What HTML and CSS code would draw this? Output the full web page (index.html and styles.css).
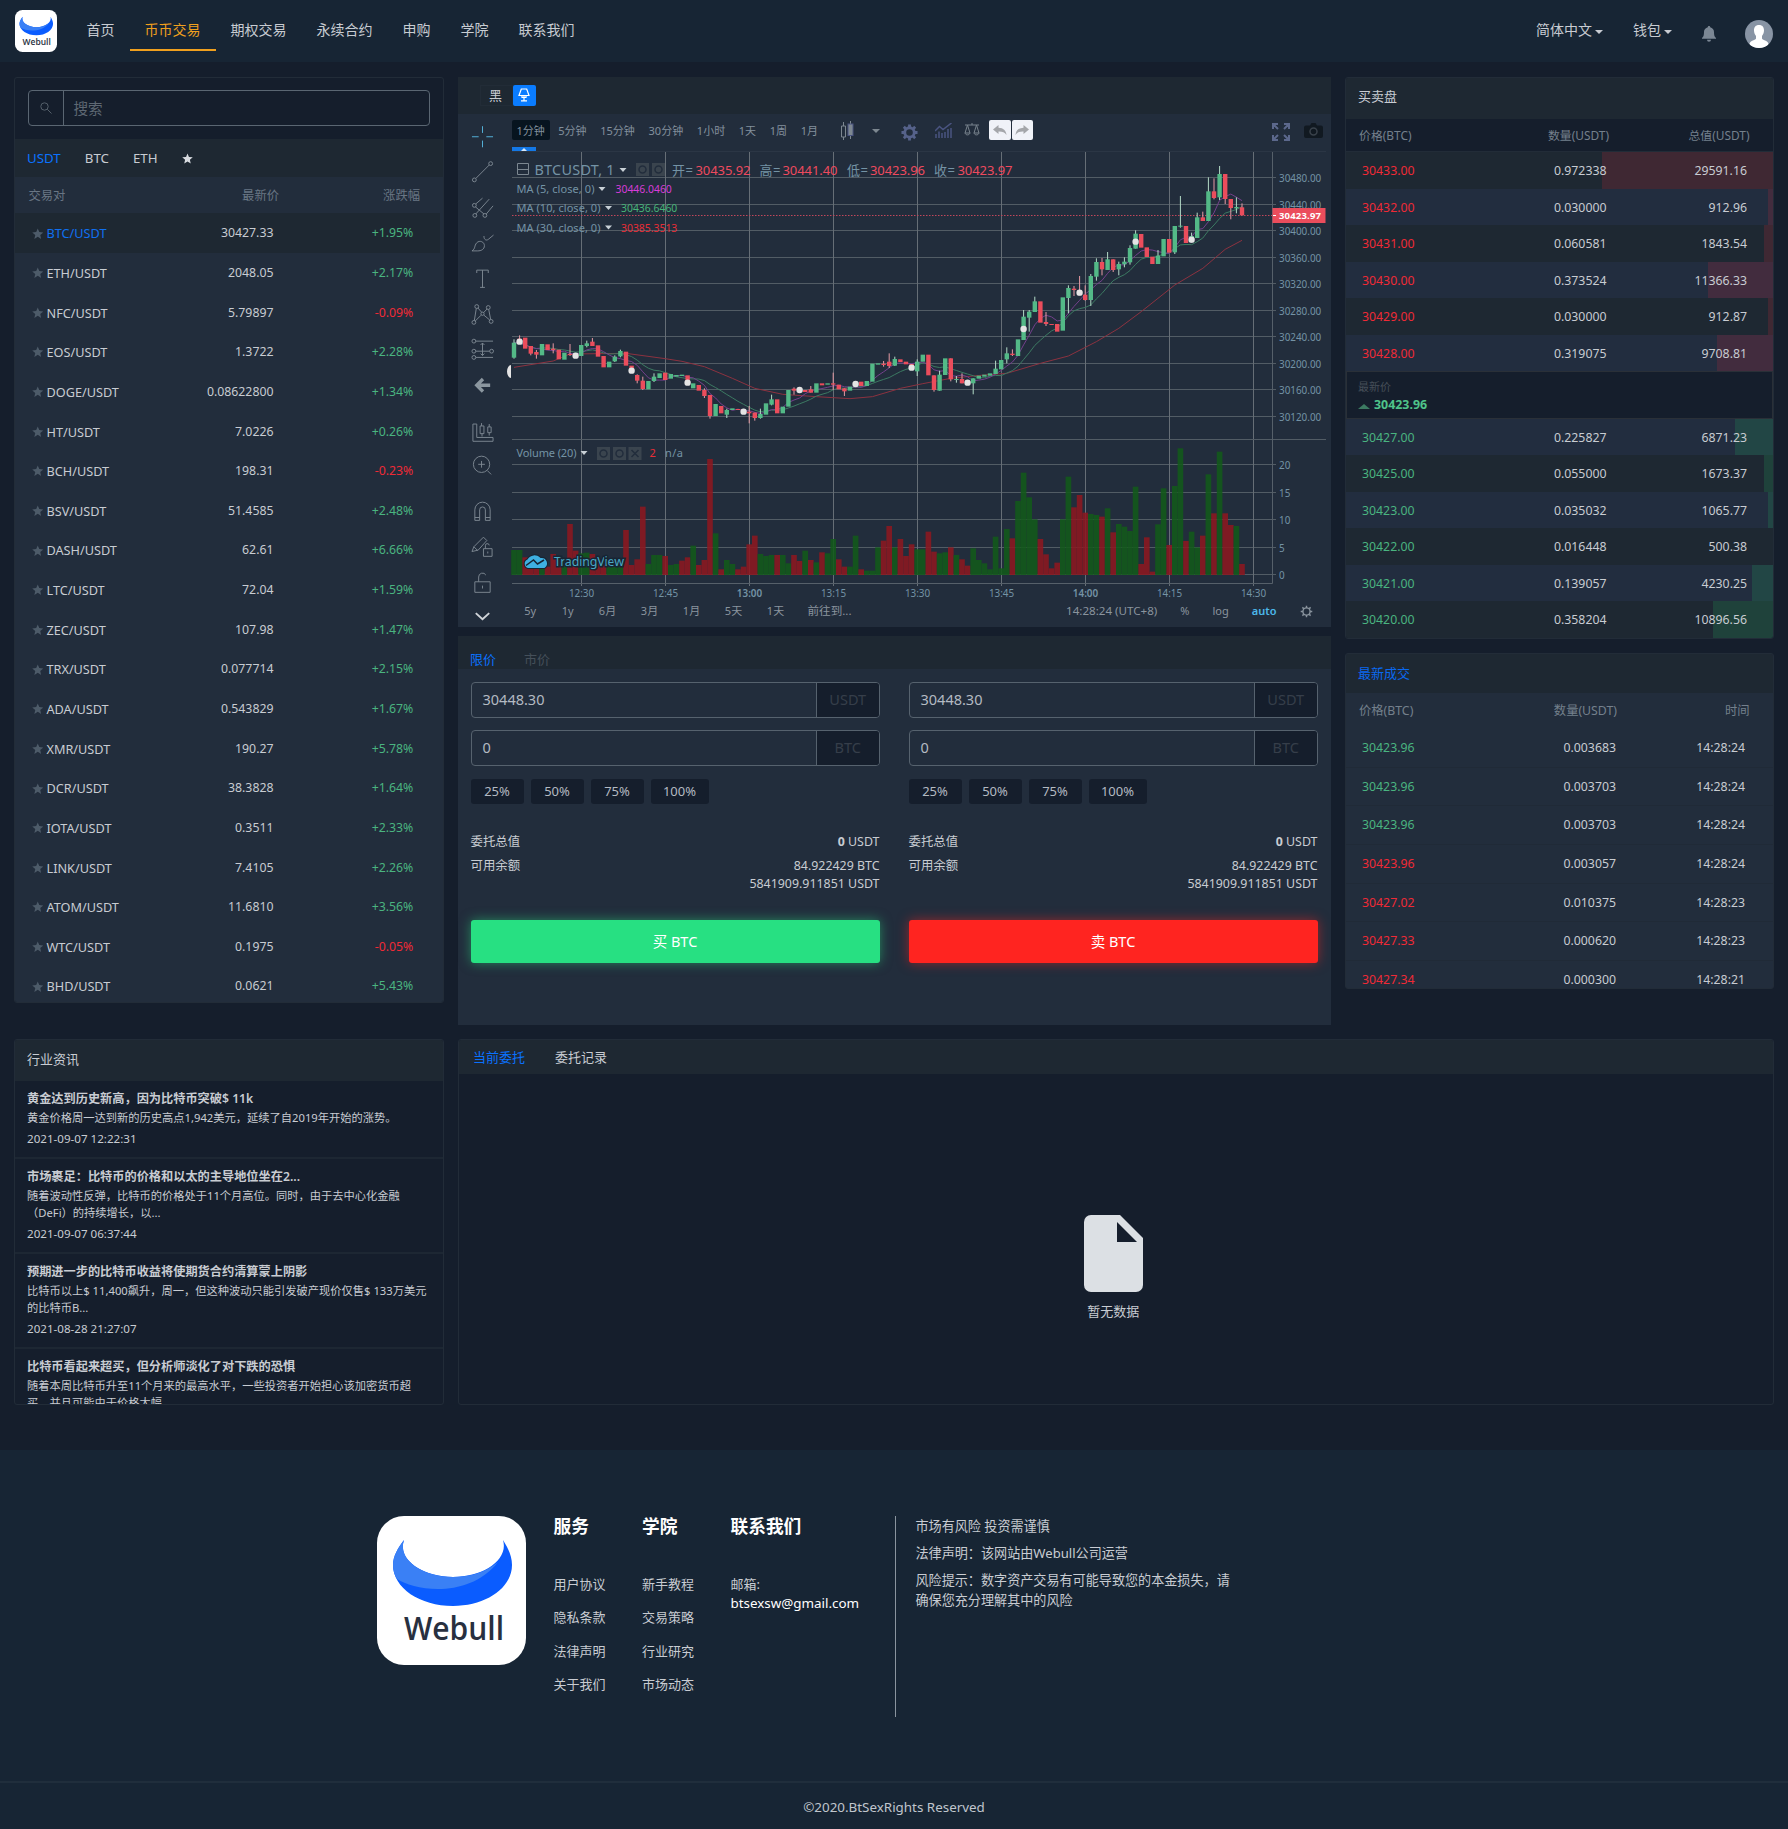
FILE: index.html
```
<!DOCTYPE html>
<html lang="zh-CN">
<head>
  <meta charset="UTF-8">
  <meta name="viewport" content="width=device-width, initial-scale=1.0">
  <title>币币交易</title>
  <link rel="stylesheet" href="styles.css">
</head>
<body>
  <svg class="sprite" width="0" height="0">
    <symbol id="star" viewBox="0 0 24 24">
      <path d="M12 1l3.2 7.6 8.3.7-6.3 5.4 1.9 8.1L12 18.5l-7.1 4.3 1.9-8.1L.5 9.300l8.300-.7z"/>
    </symbol>
  </svg>

  <header class="navbar">
    <svg class="navbar-logo" viewBox="0 0 149 149">
      <rect width="149" height="149" rx="27" fill="#fff"/>
      <path d="M27 24C21 32 16 40 16 49c0 23 27 41 60 41s59-18 59-41c0-9-4-17-9-25 6 20-20 37-50 37S20 44 27 24z" fill="#0a5cff"/>
      <path d="M27 24C21 32 16 40 16 49c0 5 1 9 4 14 18 12 72 20 101-17-12 10-27 15-45 15C46 61 20 44 27 24z" fill="#3a80f5"/>
      <text class="logo-text" x="27" y="124" textLength="100" lengthAdjust="spacingAndGlyphs">Webull</text>
    </svg>
    <nav class="nav">
      <a class="nav-link">首页</a>
      <a class="nav-link nav-link--active">币币交易</a>
      <a class="nav-link">期权交易</a>
      <a class="nav-link">永续合约</a>
      <a class="nav-link">申购</a>
      <a class="nav-link">学院</a>
      <a class="nav-link">联系我们</a>
    </nav>
    <div class="user-nav">
      <a class="dropdown">简体中文</a>
      <a class="dropdown">钱包</a>
      <svg class="bell" viewBox="0 0 14 16"><path d="M7 0c.7 0 1.200.5 1.200 1.200C10.500 1.800 12 3.600 12 6c0 4 1 5 2 6v.8H0V12c1-1 2-2 2-6 0-2.400 1.500-4.200 3.800-4.800C5.800.5 6.300 0 7 0zM5 13.800h4a2 2 0 0 1-4 0z" fill="#7b8794"/></svg>
      <svg class="avatar" viewBox="0 0 28 28">
        <clipPath id="round"><circle cx="14" cy="14" r="14"/></clipPath>
        <g clip-path="url(#round)">
          <rect width="28" height="28" fill="#8894a4"/>
          <path d="M14 5c3.400 0 5 2.200 5 5.300 0 2.500-.8 4.300-2 5.600v2.600c0 1.500 6 1.700 6.500 5.500L22 28H6l-1.500-4c.5-3.800 6.500-4 6.500-5.500v-2.600c-1.200-1.300-2-3.100-2-5.600C9 7.200 10.600 5 14 5z" fill="#fff"/>
        </g>
      </svg>
    </div>
  </header>

  <main class="layout">
    <section class="panel markets">
      <div class="search">
        <span class="search-icon"><svg viewBox="0 0 12 12"><circle cx="4.500" cy="4.500" r="3.700"/><path d="M7.300 7.300L11.500 11.500"/></svg></span>
        <span class="search-input">搜索</span>
      </div>
      <div class="market-tabs">
        <a class="active">USDT</a><a>BTC</a><a>ETH</a><a><svg class="tab-star"><use href="#star"/></svg></a>
      </div>
      <div class="market-head"><span>交易对</span><span>最新价</span><span>涨跌幅</span></div>
      <div id="markets"></div>
    </section>

    <div class="center">
      <section class="chart">
        <div class="theme-bar">
          <span class="theme-name">黑</span>
          <span class="theme-btn"><svg viewBox="0 0 12 14"><path d="M3.300 1h5.400L11 7.500H1zM6 7.500V12.500M3 12.800h6M4 7.500v2h4v-2"/></svg></span>
        </div>
        <div class="chart-body">
          <div class="tools">
            <svg class="tool tool--on" viewBox="0 0 24 24"><path d="M12 1v7M12 16v7M1 12h7M16 12h7"/></svg>
            <svg class="tool" viewBox="0 0 24 24"><circle cx="3.500" cy="20.500" r="2"/><circle cx="20.500" cy="3.500" r="2"/><path d="M5 19L19 5"/></svg>
            <svg class="tool" viewBox="0 0 24 24"><circle cx="3.500" cy="9.500" r="2"/><circle cx="4" cy="20" r="2"/><circle cx="14.500" cy="20" r="2"/><path d="M5 8l7-6M5 18.500L19 3M16 18.500L23 10M4.500 11l9 7.500"/></svg>
            <svg class="tool" viewBox="0 0 24 24"><path d="M1 20.500c4-2.500 2-5 5-8.500 3-3 8-1 8 3s-3.500 5.500-7 5.500zM13.500 5c0 4 2.500 5 4.500 3.500L23.500 4"/></svg>
            <svg class="tool" viewBox="0 0 24 24"><path d="M6 6V3h12v3M12 3v18M9.500 21h5"/></svg>
            <svg class="tool" viewBox="0 0 24 24"><circle cx="6" cy="4.500" r="2"/><circle cx="18" cy="5.500" r="2"/><circle cx="12" cy="12" r="1.700"/><circle cx="3" cy="21" r="2"/><circle cx="21" cy="20" r="2"/><path d="M5.500 6.500L3.500 19M7.200 6l4 4.500M16.800 7l-3.800 4M18.500 7.500l2 10.500M4.500 19.500l6-6M13.500 13.500l6 5"/></svg>
            <svg class="tool" viewBox="0 0 24 24"><circle cx="3" cy="3" r="2"/><circle cx="3" cy="13.500" r="2"/><circle cx="21.500" cy="13.500" r="2"/><circle cx="3" cy="20" r="2"/><path d="M5 3h18M5 13.500h14.500M5 20h18M12 5v13M10 7l2-2 2 2M10 16l2 2 2-2"/></svg>
            <svg class="tool tool--back" viewBox="0 0 24 24"><path d="M6 12.500h14M12.500 6L6 12.500l6.500 6.500"/></svg>
            <svg class="tool tool--gap" viewBox="0 0 24 24"><path d="M2 5v18h21v-4H6V5zM11 4v3M9.500 7h4v8h-4zM11.500 15v3M19 5v3M17.500 8h3.500v6h-3.500zM19 14v3"/></svg>
            <svg class="tool" viewBox="0 0 24 24"><circle cx="11" cy="10.500" r="8.500"/><path d="M11 7v7M7.500 10.500h7M17 17l4 4"/></svg>
            <svg class="tool tool--gap" viewBox="0 0 24 24"><path d="M4 21V10a8 8 0 0 1 16 0v11h-5V10a3 3 0 0 0-6 0v11zM4 18h5M15 18h5"/></svg>
            <svg class="tool" viewBox="0 0 24 24"><path d="M1 17l2-5L13 2l3.500 3.500-9 10zM3 12l4 4M13 14h9v8h-9zM15 14v-3a2 2 0 0 1 4-.5M17.500 17v2"/></svg>
            <svg class="tool" viewBox="0 0 24 24"><path d="M4 11h16v11H4zM8 11V6a4 4 0 0 1 7.500-2M12 15v3"/></svg>
            <svg class="tool tool--down" viewBox="0 0 24 24"><path d="M5 10l7 6.500L19 10"/></svg>
          </div>
          <div class="chart-main">
            <div class="chart-toolbar">
              <a class="interval interval--active">1分钟</a>
              <a class="interval">5分钟</a>
              <a class="interval">15分钟</a>
              <a class="interval">30分钟</a>
              <a class="interval">1小时</a>
              <a class="interval">1天</a>
              <a class="interval">1周</a>
              <a class="interval">1月</a>
              <svg class="ti ti-candle" viewBox="0 0 14 20"><path d="M3.500 1v4M3.500 16v3M1.500 5h4v11h-4z" fill="none" stroke="#7d8790"/><path d="M10.500 0v3M10.500 14v4" stroke="#7d8790"/><rect x="8" y="3" width="5" height="11.500" fill="#7d8790"/></svg>
              <span class="ti ti-caret"></span>
              <svg class="ti ti-gear" viewBox="0 0 18 18"><circle cx="9" cy="9" r="5"/><path d="M9 0.500v3M9 14.500v3M.5 9h3M14.500 9h3M3 3l2.200 2.200M12.800 12.800L15 15M15 3l-2.200 2.200M5.200 12.800L3 15"/></svg>
              <svg class="ti ti-ind" viewBox="0 0 17 15"><path d="M1 15v-4M4 15V8.500M7 15v-5M10 15V9M13 15V6M16 15V5M0 8l4.500-4.500 3.500 3L16.500 0"/></svg>
              <svg class="ti ti-scale" viewBox="0 0 16 14"><path d="M1 2h14M8 0v2M3.500 2L1 10h5zM12.500 2L10 10h5zM1 10c.5 2.500 4.500 2.500 5 0M10 10c.5 2.500 4.500 2.500 5 0"/></svg>
              <span class="undo"><svg viewBox="0 0 14 10"><path d="M5.500 0v2.800C10.500 3 13 5.500 13.500 10c-2-2.800-4-3.600-8-3.500V9L0 4.500z"/></svg></span>
              <span class="undo"><svg viewBox="0 0 14 10"><path d="M8.500 0v2.800C3.500 3 1 5.500.5 10c2-2.800 4-3.600 8-3.500V9L14 4.500z"/></svg></span>
              <svg class="ti ti-full" viewBox="0 0 18 18"><path d="M1 6V1h5M1 1l5 5M12 1h5v5M17 1l-5 5M1 12v5h5M1 17l5-5M17 12v5h-5M17 17l-5-5"/></svg>
              <svg class="ti ti-cam" viewBox="0 0 19 15"><path d="M2 2.500h4L7.500 0h4L13 2.500h4a2 2 0 0 1 2 2V13a2 2 0 0 1-2 2H2a2 2 0 0 1-2-2V4.500a2 2 0 0 1 2-2z" fill="#111921" stroke="none"/><circle cx="9.500" cy="8.500" r="3.500" fill="none" stroke="#3a424b" stroke-width="1.500"/></svg>
            </div>
            <div class="toolbar-tab"></div>
            <svg id="chart" class="chart-canvas" width="818" height="450" viewBox="512 151 818 450"></svg>
            <div class="range-bar">
              <a>5y</a><a>1y</a><a>6月</a><a>3月</a><a>1月</a><a>5天</a><a>1天</a><a class="goto">前往到...</a>
              <span class="clock">14:28:24 (UTC+8)</span><span class="pct">%</span><span class="log">log</span><span class="auto">auto</span>
              <svg class="cog" viewBox="0 0 18 18"><circle cx="9" cy="9" r="5"/><path d="M9 1v3M9 14v3M1 9h3M14 9h3M3.300 3.300l2 2M12.700 12.700l2 2M14.700 3.300l-2 2M5.300 12.700l-2 2"/></svg>
            </div>
          </div>
        </div>
      </section>

      <section class="trade">
        <div class="trade-tabs"><a class="active">限价</a><a>市价</a></div>
        <div class="trade-forms">
          <form class="trade-form">
            <div class="field"><span class="field-value">30448.30</span><span class="field-unit">USDT</span></div>
            <div class="field"><span class="field-value">0</span><span class="field-unit">BTC</span></div>
            <div class="percents"><a>25%</a><a>50%</a><a>75%</a><a>100%</a></div>
            <div class="sum"><span>委托总值</span><span><b>0</b> USDT</span></div>
            <div class="sum sum--balance"><span>可用余额</span><span>84.922429 BTC<br>5841909.911851 USDT</span></div>
            <a class="submit submit--buy">买 BTC</a>
          </form>
          <form class="trade-form">
            <div class="field"><span class="field-value">30448.30</span><span class="field-unit">USDT</span></div>
            <div class="field"><span class="field-value">0</span><span class="field-unit">BTC</span></div>
            <div class="percents"><a>25%</a><a>50%</a><a>75%</a><a>100%</a></div>
            <div class="sum"><span>委托总值</span><span><b>0</b> USDT</span></div>
            <div class="sum sum--balance"><span>可用余额</span><span>84.922429 BTC<br>5841909.911851 USDT</span></div>
            <a class="submit submit--sell">卖 BTC</a>
          </form>
        </div>
      </section>
    </div>

    <div class="side">
      <section class="panel book">
        <h2 class="book-title">买卖盘</h2>
        <div class="book-head"><span>价格(BTC)</span><span>数量(USDT)</span><span>总值(USDT)</span></div>
        <div id="asks"></div>
        <div class="last">
          <div class="last-label">最新价</div>
          <div class="last-price">30423.96</div>
        </div>
        <div id="bids"></div>
      </section>
      <section class="panel deals">
        <h2 class="deals-title">最新成交</h2>
        <div class="deals-head"><span>价格(BTC)</span><span>数量(USDT)</span><span>时间</span></div>
        <div id="deals"></div>
      </section>
    </div>

    <section class="panel news">
      <h2 class="news-title">行业资讯</h2>
      <article class="news-item">
        <h3>黄金达到历史新高，因为比特币突破$ 11k</h3>
        <p>黄金价格周一达到新的历史高点1,942美元，延续了自2019年开始的涨势。</p>
        <time>2021-09-07 12:22:31</time>
      </article>
      <article class="news-item">
        <h3>市场裹足：比特币的价格和以太的主导地位坐在2...</h3>
        <p>随着波动性反弹，比特币的价格处于11个月高位。同时，由于去中心化金融<br>（DeFi）的持续增长，以...</p>
        <time>2021-09-07 06:37:44</time>
      </article>
      <article class="news-item">
        <h3>预期进一步的比特币收益将使期货合约清算蒙上阴影</h3>
        <p>比特币以上$ 11,400飙升，周一，但这种波动只能引发破产现价仅售$ 133万美元<br>的比特币B...</p>
        <time>2021-08-28 21:27:07</time>
      </article>
      <article class="news-item">
        <h3>比特币看起来超买，但分析师淡化了对下跌的恐惧</h3>
        <p>随着本周比特币升至11个月来的最高水平，一些投资者开始担心该加密货币超<br>买，并且可能由于价格大幅</p>
      </article>
    </section>

    <section class="panel orders">
      <div class="orders-tabs"><a class="active">当前委托</a><a>委托记录</a></div>
      <div class="empty">
        <svg viewBox="0 0 59 77"><path d="M7 0h29l23 23v47a7 7 0 0 1-7 7H7a7 7 0 0 1-7-7V7a7 7 0 0 1 7-7z" fill="#dce0e4"/><path d="M33 7l20 20H33z" fill="#151e2c"/></svg>
        <span>暂无数据</span>
      </div>
    </section>
  </main>

  <footer class="footer">
    <div class="footer-main">
      <svg class="footer-logo" viewBox="0 0 149 149">
        <rect width="149" height="149" rx="27" fill="#fff"/>
        <path d="M27 24C21 32 16 40 16 49c0 23 27 41 60 41s59-18 59-41c0-9-4-17-9-25 6 20-20 37-50 37S20 44 27 24z" fill="#0a5cff"/>
        <path d="M27 24C21 32 16 40 16 49c0 5 1 9 4 14 18 12 72 20 101-17-12 10-27 15-45 15C46 61 20 44 27 24z" fill="#3a80f5"/>
        <text class="logo-text" x="27" y="124" textLength="100" lengthAdjust="spacingAndGlyphs">Webull</text>
      </svg>
      <div class="footer-col">
        <h4>服务</h4>
        <a>用户协议</a><a>隐私条款</a><a>法律声明</a><a>关于我们</a>
      </div>
      <div class="footer-col">
        <h4>学院</h4>
        <a>新手教程</a><a>交易策略</a><a>行业研究</a><a>市场动态</a>
      </div>
      <div class="footer-col footer-col--contact">
        <h4>联系我们</h4>
        <p>邮箱:<br><span class="mail">btsexsw@gmail.com</span></p>
      </div>
      <div class="footer-note">
        <p>市场有风险 投资需谨慎</p>
        <p>法律声明：该网站由Webull公司运营</p>
        <p>风险提示：数字资产交易有可能导致您的本金损失，请确保您充分理解其中的风险</p>
      </div>
    </div>
    <div class="copyright">©2020.BtSexRights Reserved</div>
  </footer>
  <script src="script.js"></script>
</body>
</html>
```
FILE: styles.css
```
* {
  margin: 0;
  padding: 0;
  box-sizing: border-box;
}

body {
  background: #151e2c;
  color: #c8ccd2;
  font-family: "Noto Sans", "Noto Sans CJK SC", sans-serif;
  font-size: 12.300px;
  line-height: 18px;
}

h2,
h3,
h4 {
  font-weight: 400;
}

.sprite {
  display: block;
}

.logo-text {
  font: 600 32px "Open Sans", sans-serif;
  fill: #283040;
}

.up {
  color: #4ab480;
}

.down {
  color: #f02a36;
}

/* Header */
.navbar {
  display: flex;
  align-items: flex-start;
  height: 62px;
  padding: 0 15px;
  background: #172534;
}

.navbar-logo {
  width: 42px;
  height: 42px;
  margin-top: 10px;
}

.nav {
  display: flex;
  margin-left: 14.500px;
}

.nav-link {
  height: 50.500px;
  padding: 20px 15px 0;
  font-size: 14px;
  line-height: 20px;
}

.nav-link--active {
  color: #f0a01e;
  border-bottom: 2px solid #f0a01e;
}

.user-nav {
  display: flex;
  margin-left: auto;
}

.dropdown {
  display: flex;
  align-items: center;
  height: 20px;
  margin: 20px 30px 0 0;
  font-size: 14px;
}

.dropdown::after {
  content: "";
  margin: 4px 0 0 3px;
  border: 4.500px solid transparent;
  border-top: 4px solid #c8ccd2;
  border-bottom: 0;
}

.bell {
  width: 14px;
  height: 16px;
  margin: 26px 29px 0 0;
}

.avatar {
  width: 28px;
  height: 28px;
  margin-top: 19.500px;
}

/* Page grid */
.layout {
  display: grid;
  grid-template-columns: 429.500px 872.500px 428.500px;
  grid-template-rows: 948.500px 366px;
  gap: 14px 14.500px;
  padding: 14.500px 14px 0;
}

.panel {
  border: 1px solid #222c38;
  border-radius: 3px;
  overflow: hidden;
}

.center,
.side {
  display: flex;
  flex-direction: column;
}

/* Markets */
.markets {
  height: 926.500px;
}

.search {
  display: flex;
  height: 35.500px;
  margin: 12.500px 12.500px 13.500px;
  border: 1px solid #5a6672;
  border-radius: 4px;
}

.search-icon {
  display: flex;
  align-items: center;
  justify-content: center;
  width: 35px;
  border-right: 1px solid #5a6672;
}

.search-icon svg {
  width: 12px;
  fill: none;
  stroke: #55606b;
}

.search-input {
  padding-left: 10px;
  color: #5e6873;
  font-size: 14.600px;
  line-height: 35px;
}

.market-tabs {
  display: flex;
  align-items: center;
  gap: 24px;
  height: 38px;
  padding-left: 12px;
  background: #1e2832;
  font-size: 13.300px;
}

.active {
  color: #0a72ff;
}

.tab-star {
  display: block;
  width: 11px;
  height: 11px;
  fill: #d8dbe0;
}

.market-head {
  display: grid;
  grid-template-columns: 130px 120.500px 141px;
  height: 36px;
  padding: 9.500px 0 0 13.500px;
  background: #222d3c;
  color: #697684;
}

.market-head span:nth-child(n + 2),
.market-row span:nth-child(n + 2) {
  text-align: right;
}

.market-row {
  display: grid;
  grid-template-columns: 130px 112px 139.800px;
  align-items: center;
  height: 39.650px;
  padding: 1px 0 0 16.500px;
  background: #222d3c;
}

.market-row:first-child {
  background: linear-gradient(90deg, #1e2832 425px, #222d3c 425px);
}

.market-row:first-child .pair {
  color: #1070f0;
}

.pair {
  display: flex;
  align-items: center;
  gap: 3.500px;
  font-size: 12.700px;
}

.pair svg {
  width: 11.500px;
  height: 11.500px;
  fill: #4d5b69;
}

/* Chart */
.chart {
  height: 550.500px;
  background: #222d3c;
}

.theme-bar {
  display: flex;
  height: 37px;
  padding: 8px 0 0 22px;
  background: #1e2832;
}

.theme-name {
  width: 33px;
  height: 21px;
  padding-left: 8px;
  border: 1px solid #222c37;
  font-size: 13px;
  line-height: 19px;
}

.theme-btn {
  display: flex;
  align-items: center;
  justify-content: center;
  width: 22.500px;
  height: 21px;
  border-radius: 2px;
  background: #0a7cff;
}

.theme-btn svg {
  width: 12px;
  fill: none;
  stroke: #fff;
  stroke-width: 1.200;
}

.chart-body {
  display: flex;
}

.tools {
  display: flex;
  flex-direction: column;
  width: 53.500px;
  height: 513px;
  padding: 5px 0 0 13px;
}

.tool {
  flex-shrink: 0;
  width: 23px;
  height: 35.500px;
  fill: none;
  stroke: #7c8791;
}

.tool--on {
  stroke: #56b4dc;
}

.tool--back {
  stroke: #8b969f;
  stroke-width: 3.500;
}

.tool--gap {
  margin-top: 10px;
}

.tool--down {
  height: 30px;
  stroke: #d0d4d8;
  stroke-width: 2;
}

.chart-main {
  width: 818px;
}

.chart-toolbar {
  display: flex;
  align-items: center;
  height: 33px;
}

.interval {
  height: 20.500px;
  padding: 0 6px;
  border-radius: 2px;
  color: #82909c;
  font-size: 11px;
  line-height: 21px;
  white-space: nowrap;
}

.interval--active {
  margin: 0 2.500px 0 0;
  padding: 0 5px;
  background: #07141f;
}

.interval:nth-child(n + 3) {
  margin-left: 1.700px;
}

.ti {
  fill: none;
  stroke: #4a5480;
}

.ti-candle {
  width: 14px;
  height: 20px;
  margin: 2px 0 0 16px;
}

.ti-caret {
  margin: 2px 0 0 18px;
  border: 4px solid transparent;
  border-top-color: #7d8790;
  border-bottom: 0;
}

.ti-gear {
  width: 17px;
  height: 17px;
  margin: 4px 0 0 20.500px;
  stroke: #56628a;
  stroke-width: 3;
}

.ti-ind {
  width: 17px;
  height: 15px;
  margin-left: 17.500px;
  stroke-width: 1.500;
}

.ti-scale {
  width: 16px;
  height: 14px;
  margin: 0 9px 0 12px;
  stroke: #77828c;
}

.undo {
  display: flex;
  align-items: center;
  justify-content: center;
  width: 21.500px;
  height: 20.500px;
  margin-right: 1px;
  border-radius: 2px;
  background: #f0f2f8;
}

.undo svg {
  width: 14px;
  fill: #a4a6aa;
}

.ti-full {
  width: 18px;
  height: 18px;
  margin: 4px 14px 0 auto;
  stroke: #5c688c;
  stroke-width: 2;
}

.ti-cam {
  width: 19px;
  height: 15px;
  margin-right: 7px;
}

.toolbar-tab {
  display: flex;
  justify-content: center;
  width: 24px;
  height: 4.500px;
  background: #1478e6;
}

.toolbar-tab::before {
  content: "";
  height: 0;
  margin-top: 1px;
  border: 3px solid transparent;
  border-top: 0;
  border-bottom-color: #d4e6fa;
}

.chart-canvas {
  display: block;
  overflow: visible;
}

.chart-canvas text {
  fill: #7493a5;
  font-size: 11px;
}

.chart-canvas .axis {
  font-size: 9.900px;
}

.chart-canvas .mid {
  font-size: 9.900px;
  text-anchor: middle;
}

.chart-canvas .symbol {
  font-size: 14.400px;
}

.chart-canvas .ohlc {
  font-size: 13px;
}

.chart-canvas .red {
  fill: #ee4a5e;
}

.chart-canvas .value {
  font-size: 10.400px;
}

.chart-canvas .white {
  fill: #fff;
  font-weight: 700;
  font-size: 9.500px;
}

.range-bar {
  display: flex;
  align-items: center;
  height: 20px;
  color: #8a949e;
  font-size: 11px;
}

.range-bar a {
  width: 42px;
  text-align: center;
}

.range-bar a:nth-child(-n + 2) {
  width: 37.500px;
}

.range-bar .goto {
  width: 66px;
  font-size: 11.600px;
}

.clock {
  margin-left: auto;
  font-size: 11.600px;
}

.pct {
  margin-left: 23px;
}

.log {
  margin-left: 23px;
}

.auto {
  margin-left: 23px;
  color: #4cb8ea;
  font-weight: 600;
}

.cog {
  width: 13px;
  margin: 0 17px 0 23px;
  fill: none;
  stroke: #8a949e;
  stroke-width: 2;
}

/* Order form */
.trade {
  height: 389px;
  margin-top: 9px;
  background: #222d3c;
}

.trade-tabs {
  display: flex;
  gap: 28px;
  height: 33px;
  padding: 14px 0 0 12px;
  background: #1e2832;
  font-size: 13px;
}

.trade-tabs a:last-child {
  color: #45505a;
}

.trade-forms {
  display: flex;
  gap: 29px;
  padding: 12.500px 13px 0 12.500px;
}

.trade-form {
  flex: 1;
}

.field {
  display: flex;
  height: 36px;
  margin-bottom: 12.500px;
  border: 1px solid #56626e;
  border-radius: 4px;
  overflow: hidden;
  font-size: 14.500px;
  line-height: 33px;
}

.field-value {
  flex: 1;
  padding-left: 11px;
  color: #b4bac2;
}

.field-unit {
  width: 62.500px;
  border-left: 1px solid #56626e;
  background: #151e2c;
  color: #363e4a;
  text-align: center;
}

.percents {
  display: flex;
  gap: 7px;
}

.percents a {
  width: 53px;
  height: 25px;
  border-radius: 3px;
  background: #151e2c;
  color: #b4bac2;
  font-size: 13px;
  line-height: 24px;
  text-align: center;
}

.percents a:last-child {
  width: 58px;
}

.sum {
  display: flex;
  justify-content: space-between;
  margin-top: 29.500px;
  font-size: 12.400px;
  text-align: right;
}

.sum--balance {
  margin: 5.500px 0 27.500px;
}

.submit {
  display: block;
  height: 43px;
  border-radius: 3px;
  color: #fff;
  font-size: 14.500px;
  line-height: 42px;
  text-align: center;
}

.submit--buy {
  background: #27e082;
  box-shadow: 0 0 12px rgba(39, 224, 130, 0.5);
}

.submit--sell {
  background: #ff2420;
  box-shadow: 0 0 12px rgba(255, 36, 32, 0.5);
}

/* Order book */
.book {
  height: 562.500px;
}

.book-title {
  height: 41px;
  padding: 10px 0 0 12px;
  background: #1e2832;
  font-size: 13px;
  line-height: 17px;
}

.book-head,
.deals-head {
  display: grid;
  grid-template-columns: 130px 120px 140.500px;
  height: 33.500px;
  padding: 7.500px 0 0 13px;
  border-bottom: 1px solid #222c38;
  color: #74808c;
}

.book-head {
  font-size: 11.900px;
}

.book-head span:nth-child(n + 2),
.book-row span:nth-of-type(n + 2),
.deals-head span:nth-child(n + 2),
.deals-row span:nth-child(n + 2) {
  text-align: right;
}

.book-row {
  position: relative;
  display: grid;
  grid-template-columns: 130px 114.500px 140.500px;
  align-items: center;
  height: 36.500px;
  padding: 2px 0 0 16px;
  background: #1e2832;
}

.book-row span {
  position: relative;
}

#asks .book-row:nth-child(even),
#bids .book-row:nth-child(odd) {
  background: #222d3f;
}

.depth {
  position: absolute;
  top: 0;
  right: 0;
  height: 100%;
  background: rgba(255, 40, 60, 0.15);
}

#bids .depth {
  background: rgba(40, 190, 100, 0.18);
}

.last {
  height: 47.500px;
  padding: 5.500px 0 0 11px;
  border: 1px solid #2a3038;
}

.last-label {
  color: #454e58;
  font-size: 11px;
}

.last-price {
  display: flex;
  align-items: center;
  gap: 4px;
  color: #4fc48a;
  font-size: 12.400px;
  font-weight: 700;
}

.last-price::before {
  content: "";
  margin-top: 3px;
  border: 6px solid transparent;
  border-top: 0;
  border-bottom: 5px solid #3c7a62;
}

.deals {
  height: 336px;
  margin-top: 14px;
  background: #222d3c;
}

.deals-title {
  height: 39px;
  padding: 10.500px 0 0 12px;
  background: #1e2832;
  color: #0a68f0;
  font-size: 13px;
  line-height: 17px;
}

.deals-head {
  grid-template-columns: 130px 128px 132.500px;
  height: 36px;
  padding-top: 9px;
  border-bottom: 0;
}

.deals-row {
  display: grid;
  grid-template-columns: 130px 124px 129px;
  align-items: center;
  height: 38.700px;
  padding-left: 16px;
  border-bottom: 1px solid #202a37;
}

/* News */
.news-title {
  height: 40.500px;
  padding: 10px 0 0 12px;
  background: #1e2832;
  font-size: 13px;
}

.news-item {
  padding: 9px 0 9px 12px;
  border-bottom: 2px solid #1d2733;
  white-space: nowrap;
}

.news-item h3 {
  font-size: 12.200px;
  font-weight: 600;
}

.news-item p {
  margin: 1px 0 4px;
  font-size: 11.250px;
  line-height: 17px;
}

.news-item time {
  display: block;
  font-size: 11.600px;
}

/* Orders */
.orders {
  grid-column: 2 / 4;
}

.orders-tabs {
  display: flex;
  gap: 30px;
  height: 34px;
  padding: 8px 0 0 14px;
  background: #1e2832;
  font-size: 13px;
}

.empty {
  display: flex;
  flex-direction: column;
  align-items: center;
  padding: 141px 5px 0 0;
  font-size: 13px;
}

.empty svg {
  width: 59px;
  margin-bottom: 9.500px;
}

/* Footer */
.footer {
  height: 380px;
  margin-top: 44.500px;
  background: #172534;
}

.footer-main {
  display: flex;
  height: 333px;
  padding: 66px 0 0 377px;
  border-bottom: 2px solid #202e3c;
}

.footer-logo {
  width: 149px;
  height: 149px;
  margin-right: 27.500px;
}

.footer-col {
  width: 88.500px;
  font-size: 13px;
}

.footer-col h4 {
  margin-bottom: 39px;
  color: #fff;
  font-size: 17.700px;
  font-weight: 700;
  line-height: 20px;
}

.footer-col a {
  display: block;
  height: 33.600px;
}

.footer-col p {
  line-height: 19.700px;
}

.footer-col--contact {
  width: 164px;
}

.mail {
  color: #fff;
  font-size: 13.400px;
}

.footer-note {
  width: 344px;
  height: 201.500px;
  padding-left: 20px;
  border-left: 1px solid #8a949e;
  font-size: 13.100px;
}

.footer-note p {
  margin-bottom: 7px;
  line-height: 20px;
}

.copyright {
  color: #c0c6cd;
  font-size: 13.400px;
  line-height: 48px;
  text-align: center;
}
```
FILE: script.js
```
(function() {
  'use strict';

  const el = id => document.getElementById(id);

  // Market list
  const markets = [
    ['BTC', '30427.33', '+1.95%'], ['ETH', '2048.05', '+2.17%'], ['NFC', '5.79897', '-0.09%'],
    ['EOS', '1.3722', '+2.28%'], ['DOGE', '0.08622800', '+1.34%'], ['HT', '7.0226', '+0.26%'],
    ['BCH', '198.31', '-0.23%'], ['BSV', '51.4585', '+2.48%'], ['DASH', '62.61', '+6.66%'],
    ['LTC', '72.04', '+1.59%'], ['ZEC', '107.98', '+1.47%'], ['TRX', '0.077714', '+2.15%'],
    ['ADA', '0.543829', '+1.67%'], ['XMR', '190.27', '+5.78%'], ['DCR', '38.3828', '+1.64%'],
    ['IOTA', '0.3511', '+2.33%'], ['LINK', '7.4105', '+2.26%'], ['ATOM', '11.6810', '+3.56%'],
    ['WTC', '0.1975', '-0.05%'], ['BHD', '0.0621', '+5.43%']
  ];
  el('markets').innerHTML = markets.map(([coin, price, change]) => `
    <div class="market-row">
      <span class="pair"><svg><use href="#star"/></svg>${coin}/USDT</span>
      <span>${price}</span>
      <span class="${change[0] === '-' ? 'down' : 'up'}">${change}</span>
    </div>`).join('');

  // Order book: price, amount, total, depth bar width
  const asks = [
    ['30433.00', '0.972338', '29591.16', 171], ['30432.00', '0.030000', '912.96', 5],
    ['30431.00', '0.060581', '1843.54', 9], ['30430.00', '0.373524', '11366.33', 65],
    ['30429.00', '0.030000', '912.87', 5], ['30428.00', '0.319075', '9708.81', 56]
  ];
  const bids = [
    ['30427.00', '0.225827', '6871.23', 38], ['30425.00', '0.055000', '1673.37', 9],
    ['30423.00', '0.035032', '1065.77', 5], ['30422.00', '0.016448', '500.38', 0],
    ['30421.00', '0.139057', '4230.25', 21], ['30420.00', '0.358204', '10896.56', 60]
  ];
  const bookRows = (rows, cls) => rows.map(([price, amount, total, depth]) => `
    <div class="book-row"><div class="depth" style="width:${depth}px"></div>
      <span class="${cls}">${price}</span><span>${amount}</span><span>${total}</span>
    </div>`).join('');
  el('asks').innerHTML = bookRows(asks, 'down');
  el('bids').innerHTML = bookRows(bids, 'up');

  // Latest deals
  const deals = [
    ['30423.96', '0.003683', '14:28:24', 'up'], ['30423.96', '0.003703', '14:28:24', 'up'],
    ['30423.96', '0.003703', '14:28:24', 'up'], ['30423.96', '0.003057', '14:28:24', 'down'],
    ['30427.02', '0.010375', '14:28:23', 'down'], ['30427.33', '0.000620', '14:28:23', 'down'],
    ['30427.34', '0.000300', '14:28:21', 'down']
  ];
  el('deals').innerHTML = deals.map(([price, amount, time, cls]) => `
    <div class="deals-row"><span class="${cls}">${price}</span><span>${amount}</span><span>${time}</span></div>`).join('');

  // Candles: up flag, body top, body bottom, wick top, wick bottom (thirds of a pixel)
  const candles = [
    [1,848,893,838,896],[0,836,850,826,850],[0,833,866],[0,858,881,858,886],[0,876,884,870,896],
    [1,852,886],[0,853,870],[0,866,870,850,880],[0,869,898],[1,878,899],
    [0,882,885,852,888],[1,880,893],[1,855,888],[1,850,858,842,862],[0,845,858,834,858],
    [0,856,890],[0,888,922],[1,905,922],[1,890,904,886,906],[1,873,889,869,892],
    [0,875,917],[0,917,938],[0,945,962,943,970],[0,962,987,950,990],[1,963,988],
    [1,950,963,940,966],[1,940,954],[0,938,960],[1,942,956],[1,945,950],
    [1,944,948],[0,946,966],[1,970,985],[0,975,992],[0,990,1008,985,1014],
    [0,1005,1068,1005,1076],[1,1032,1068],[0,1038,1060],[1,1050,1064,1046,1074],[1,1045,1050],
    [0,1047,1050],[0,1048,1056],[0,1055,1060,1038,1090],[0,1058,1074,1058,1082],[1,1062,1074,1046,1076],
    [1,1030,1064],[1,1018,1034,1004,1036],[0,1018,1060],[1,1040,1060],[1,990,1040],
    [0,986,992,982,1004],[1,988,993],[0,990,996],[0,988,998,978,998],[1,970,998],
    [0,970,976],[1,970,974],[0,970,974,938,990],[0,974,988],[0,985,994,985,1008],
    [1,980,992],[1,970,980],[0,965,978],[1,963,978],[1,911,965],
    [1,910,914],[0,911,915,903,920],[0,905,918,880,924],[1,897,917,890,918],[0,898,906],
    [0,905,913],[0,912,922],[1,905,934,898,948],[1,884,905],[0,884,946],
    [0,946,990,946,995],[1,944,992,932,992],[1,895,945],[0,895,958,895,964],[1,957,960,948,968],
    [0,957,970,940,970],[0,962,972],[1,955,970,955,1003],[1,947,956],[1,944,950],
    [1,940,947],[1,926,942,902,942],[1,900,928],[1,880,898,862,910],[0,881,885,868,888],
    [1,838,888],[1,770,840,750,840],[1,755,773,750,815],[1,724,756,710,756],[0,724,788],
    [0,786,792,756,798],[0,792,795],[0,792,815],[1,712,812],[1,684,714,676,760],
    [0,686,690,678,708],[0,690,704,648,706],[0,704,720,676,722],[1,648,720,642,738],[1,606,650,595,662],
    [0,606,628,594,646],[1,598,630,576,630],[0,598,630,598,636],[1,612,628,605,646],[1,605,613,592,622],
    [1,564,607,556,614],[1,521,566,511,566],[0,522,563],[0,562,591],[0,590,612],
    [1,587,612,570,612],[1,537,589],[0,537,578],[1,498,577,498,582],[1,497,500,408,503],
    [0,498,549],[1,528,545,518,548],[1,472,534,458,534],[0,472,483,455,483],[1,394,483,352,483],
    [0,394,414,355,418],[1,342,412,318,420],[0,342,417,342,432],[0,417,444,417,478],[1,441,445,412,460],
    [0,442,466,430,466]
  ];

  // Volume heights, negative for a falling bar
  const volumes = [
    75,75,-53,-50,-40,30,-25,-63,-50,50,-153,-73,65,67,-63,-40,-30,25,30,35,
    -135,-30,-47,-205,33,60,60,-57,30,33,-43,-53,88,-30,-45,-348,125,-17,45,33,
    -17,-25,-92,-118,63,57,60,-60,60,35,-60,-42,73,-45,38,-68,65,108,-47,-25,
    25,118,-17,13,13,83,-103,-147,83,-108,-57,-92,77,77,-130,-70,65,68,-83,60,
    -47,-28,80,45,35,17,115,20,138,-110,222,307,233,167,-108,-62,-20,-37,167,295,
    -203,-240,-187,183,180,-175,200,-128,153,145,132,265,-33,-113,-10,152,260,-90,267,380,
    -102,130,83,-118,302,-185,370,-185,-150,147,-33
  ];

  const dots = [
    [1,845],[11,887],[21,932],[31,968],[41,1055],[51,990],[61,972],[71,923],
    [81,968],[91,807],[101,698],[111,545],[121,539]
  ];

  const ma30 = [
    [0,922],[7,903],[10,882],[20,880],[27,896],[30,904],[34,920],[39,955],[43,985],[48,1003],
    [54,1010],[60,1016],[64,1010],[69,985],[73,971],[78,955],[82,948],[84,945],[88,940],[94,910],
    [99,888],[104,845],[108,805],[112,755],[118,675],[123,625],[127,568],[130,541]
  ];

  const x = i => 514 + i * 5.6;
  const y = v => 60 + v / 3;
  const out = [];
  const line = (x1, y1, x2, y2, stroke, extra = '') =>
    out.push(`<path d="M${x1} ${y1}L${x2} ${y2}" stroke="${stroke}" ${extra}/>`);
  const text = (tx, ty, str, cls = '', extra = '') =>
    out.push(`<text x="${tx}" y="${ty}" class="${cls}" ${extra}>${str}</text>`);

  // Grid and axes
  line(512, 151.5, 1326, 151.5, '#2b3645');
  for (let i = 0; i < 10; i++) {
    const gy = Math.round(177.3 + i * 26.49) + 0.5;
    line(512, gy, 1276, gy, '#525c65');
    text(1279, gy + 4, (30480 - i * 40) + '.00', 'axis');
  }
  for (let i = 0; i < 5; i++) {
    const gy = Math.round(464 + i * 27.6) + 0.5;
    line(512, gy, 1276, gy, '#525c65');
    text(1279, gy + 4, 20 - i * 5, 'axis');
  }
  ['12:30', '12:45', '13:00', '13:15', '13:30', '13:45', '14:00', '14:15', '14:30'].forEach((t, i) => {
    const gx = 581.5 + i * 84;
    line(gx, 152, gx, 586, '#666e76');
    text(gx, 597, t, 'mid', i === 2 || i === 6 ? 'font-weight="600"' : '');
  });
  line(512, 439.5, 1326, 439.5, '#525c65');
  line(512, 583.5, 1272.5, 583.5, '#56606a');
  line(1272.5, 152, 1272.5, 583.5, '#56606a');
  line(512, 215.5, 1272, 215.5, '#c0475b', 'stroke-dasharray="1.500 1.500"');

  // Volume
  volumes.forEach((v, i) => {
    const h = Math.abs(v) / 3;
    out.push(`<rect x="${x(i) - 2.8}" y="${575 - h}" width="5.600" height="${h}" fill="${v > 0 ? '#125a1a' : '#8c1820'}" fill-opacity=".88"/>`);
  });

  // Moving averages
  const closes = candles.map(c => c[0] ? c[1] : c[2]);
  const average = n => closes.map((_, i) => {
    const part = closes.slice(Math.max(0, i - n + 1), i + 1);
    return [i, part.reduce((a, b) => a + b) / part.length];
  });
  const poly = (pts, color) =>
    out.push(`<polyline points="${pts.map(p => x(p[0]) + ',' + y(p[1])).join(' ')}" fill="none" stroke="${color}"/>`);
  poly(ma30, '#8c3240');
  poly(average(10), '#3c7a62');
  poly(average(5), '#74408c');

  // Candles
  candles.forEach(([up, top, bottom, high, low], i) => {
    if (high) line(x(i), y(high), x(i), y(low), up ? '#b4dcc8' : '#e89aa4');
    out.push(`<rect x="${x(i) - 2.2}" y="${y(top)}" width="4.400" height="${(bottom - top) / 3}" fill="${up ? '#53b987' : '#eb4d5c'}"/>`);
  });
  dots.forEach(([i, v]) => out.push(`<circle cx="${x(i)}" cy="${y(v)}" r="3.200" fill="#e4e4e4"/>`));

  // Pane handle on the left edge
  out.push('<path d="M511 365a4 6.500 0 0 0 0 13z" fill="#e4e4e4"/>');

  // Last price tag
  out.push('<rect x="1272.500" y="208" width="53" height="15" fill="#eb4d5c"/>');
  line(1273, 215.5, 1276, 215.5, '#fff');
  text(1279, 219, '30423.97', 'white', 'textLength="42"');

  // Legend
  const caret = (cx, cy) => out.push(`<path d="M${cx - 3.5} ${cy - 2}h7l-3.500 4z" fill="#c8d0d6"/>`);
  const box = (bx, by, kind) => {
    out.push(`<rect x="${bx}" y="${by}" width="13" height="13" fill="#3a444e"/>`);
    out.push(kind === 'x'
      ? `<path d="M${bx + 3} ${by + 3}l7 7m0-7l-7 7" stroke="#222d3c" stroke-width="1.500"/>`
      : `<circle cx="${bx + 6.5}" cy="${by + 6.5}" r="3.500" fill="none" stroke="#222d3c" stroke-width="1.500"/>`);
  };
  out.push('<path d="M517.500 163.500h11v11h-11zM517.500 169.500h11" fill="none" stroke="#7c8791"/>');
  text(534.5, 175, 'BTCUSDT, 1', 'symbol', 'textLength="80"');
  caret(623, 170);
  box(636, 163);
  box(652, 163);
  [['开=', 672, '30435.92', 695.5], ['高=', 759.5, '30441.40', 782.5], ['低=', 847, '30423.96', 870], ['收=', 934, '30423.97', 957.5]].forEach(([k, kx, v, vx]) => {
    text(kx, 175, k, 'ohlc', 'textLength="21"');
    text(vx, 175, v, 'ohlc red', 'textLength="55"');
  });
  text(516.5, 193, 'MA (5, close, 0)', '', 'textLength="78"');
  caret(602, 189);
  text(615.5, 193, '30446.0460', 'value', 'style="fill:#d83cd8"');
  text(516.5, 212, 'MA (10, close, 0)', '', 'textLength="84"');
  caret(608.5, 208);
  text(621, 212, '30436.6460', 'value', 'style="fill:#46b478"');
  text(516.5, 231.5, 'MA (30, close, 0)', '', 'textLength="84"');
  caret(608.5, 227.5);
  text(621, 231.5, '30385.3513', 'value', 'style="fill:#e82d37"');
  text(516.5, 457, 'Volume (20)', '', 'textLength="60"');
  caret(584, 453);
  box(597, 447);
  box(613, 447);
  box(628.5, 447, 'x');
  text(649.5, 457, '2', '', 'style="fill:#e82d37"');
  text(665, 457, 'n/a', '', 'textLength="18"');

  // TradingView mark
  out.push('<path d="M528 568a4.500 4.500 0 0 1-.5-8.500 8 8 0 0 1 13-1.500 5.500 5.500 0 0 1 4 10z" fill="#3eb0e2" stroke="#172534" stroke-width="2" paint-order="stroke"/>');
  out.push('<path d="M526 565.500l7.500-5.500 4 4 6.500-4" fill="none" stroke="#172534" stroke-width="1.500"/>');
  text(554, 566, 'TradingView', '', 'textLength="70" style="font-size:12.500px;fill:#4aa8c4;stroke:#172534;stroke-width:3px;paint-order:stroke"');

  el('chart').innerHTML = out.join('');
})();
```
